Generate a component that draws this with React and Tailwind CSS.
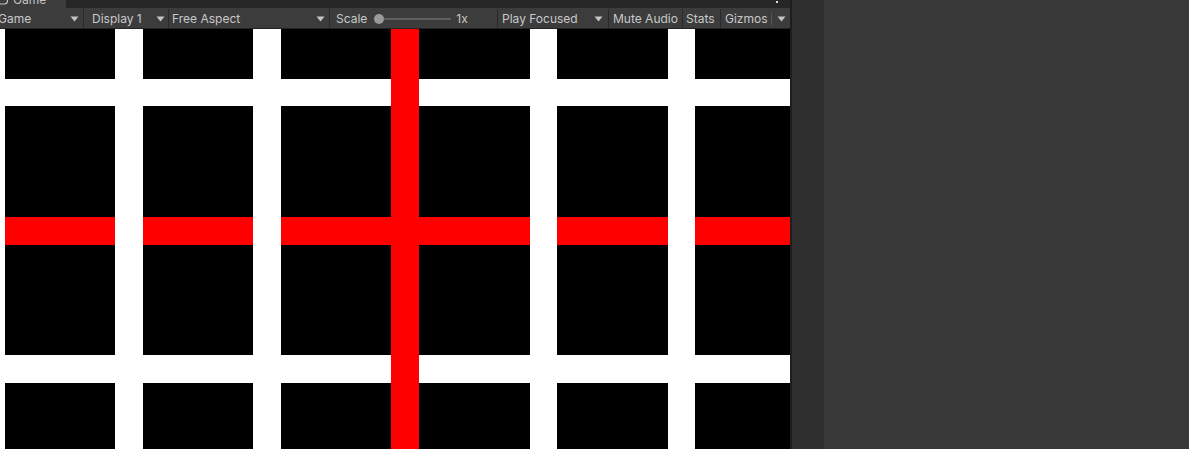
import React from 'react';

const cols = [
  ['w', 5], ['b', 110], ['w', 28], ['b', 110], ['w', 28], ['b', 110],
  ['r', 28], ['b', 111], ['w', 27], ['b', 111], ['w', 27], ['b', 95],
];
const rows = [['b', 50], ['w', 27], ['b', 111], ['r', 28], ['b', 110], ['w', 28], ['b', 66]];

function cellClass(c, r) {
  if (c === 'r') return 'bg-[#ff0000]';
  if (c === 'w') return 'bg-white';
  if (r === 'r') return 'bg-[#ff0000]';
  if (r === 'w') return 'bg-white';
  return 'bg-black';
}

function Arrow() {
  return (
    <svg width="9" height="6" viewBox="0 0 9 6" className="shrink-0">
      <path d="M0.5 0.5 L8.5 0.5 L4.5 5.5 Z" fill="#c4c4c4" />
    </svg>
  );
}

export default function App() {
  return (
    <div
      className="flex w-[1189px] h-[449px] overflow-hidden bg-[#383838]"
      style={{ fontFamily: 'Inter, "Liberation Sans", sans-serif' }}
    >
      {/* ── Game window ── */}
      <div className="flex flex-col w-[790px] shrink-0">
        {/* tab strip (scrolled off the top) */}
        <div className="h-[8px] overflow-hidden bg-[#262626] relative">
          <div className="flex h-[19px] -mt-[10px]">
            <div className="w-[66px] h-full bg-[#3c3c3c] flex items-center gap-[5px] pl-[1px] text-[12px] text-[#c4c4c4]">
              <svg width="14" height="10" viewBox="0 0 14 10" className="-ml-[7px]">
                <rect x="0.5" y="1" width="13" height="8" rx="3" fill="none" stroke="#c4c4c4" strokeWidth="1.2" />
              </svg>
              <span>Game</span>
            </div>
          </div>
          <div className="absolute left-[776px] top-[1px] w-[2px] h-[2px] bg-[#dcdcdc]" />
        </div>

        {/* toolbar */}
        <div className="flex h-[21px] pt-[1px] bg-[#3c3c3c] border-b border-[#232323] text-[12px] text-[#c8c8c8] leading-none">
          <div className="w-[84px] flex items-center justify-between pr-[4px] border-r border-[#2a2a2a]">
            <span className="-ml-[2px]">Game</span>
            <Arrow />
          </div>
          <div className="w-[85px] flex items-center justify-between pl-[8px] pr-[3px] border-r border-[#2a2a2a]">
            <span>Display 1</span>
            <Arrow />
          </div>
          <div className="w-[161px] flex items-center justify-between pl-[3px] pr-[4px] border-r border-[#2a2a2a]">
            <span>Free Aspect</span>
            <Arrow />
          </div>
          <div className="w-[168px] flex items-center pl-[6px] border-r border-[#2a2a2a]">
            <span>Scale</span>
            <div className="relative ml-[7px] w-[77px] h-[10px] flex items-center">
              <div className="absolute left-[5px] right-0 h-[2px] bg-[#5f5f5f]" />
              <div className="absolute left-0 w-[10px] h-[10px] rounded-full bg-[#9a9a9a]" />
            </div>
            <span className="ml-[5px]">1x</span>
          </div>
          <div className="w-[111px] flex items-center justify-between pl-[4px] pr-[5px] border-r border-[#2a2a2a]">
            <span>Play Focused</span>
            <Arrow />
          </div>
          <div className="w-[74px] flex items-center pl-[4px] border-r border-[#2a2a2a]">
            <span>Mute Audio</span>
          </div>
          <div className="w-[38px] flex items-center pl-[3px] border-r border-[#2a2a2a]">
            <span>Stats</span>
          </div>
          <div className="flex-1 flex items-center pl-[4px]">
            <span>Gizmos</span>
            <div className="ml-[3px] w-px h-[12px] bg-[#555555]" />
            <div className="ml-[5px]">
              <Arrow />
            </div>
          </div>
        </div>

        {/* game view */}
        <div
          className="grid flex-1 bg-white"
          style={{
            gridTemplateColumns: cols.map((c) => c[1] + 'px').join(' '),
            gridTemplateRows: rows.map((r) => r[1] + 'px').join(' '),
          }}
        >
          {rows.map((r, ri) =>
            cols.map((c, ci) => <div key={ri + '-' + ci} className={cellClass(c[0], r[0])} />)
          )}
        </div>
      </div>

      {/* ── divider + side panels ── */}
      <div className="w-[2px] shrink-0 bg-[#1e1e1e]" />
      <div className="w-[32px] shrink-0 bg-[#2f2f2f]" />
      <div className="flex-1 bg-[#383838]" />
    </div>
  );
}
